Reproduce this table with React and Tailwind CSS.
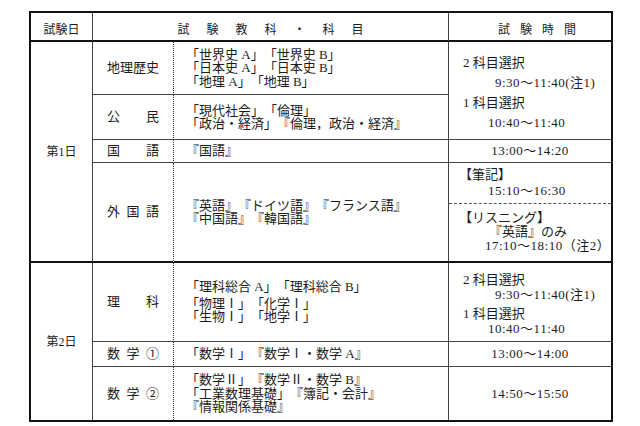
const dayCell =
  "flex items-center justify-center border-r border-b-2 border-r-[#444] border-b-[#111] text-[12px]";

function Name({ chars, last }) {
  return (
    <div
      className={`flex items-center justify-center border-r [border-right-style:dotted] border-r-[#333] ${
        last ? "border-b-2 border-b-[#111]" : last === false ? "" : "border-b border-b-[#444]"
      }`}
    >
      <span className="flex w-[52px] justify-between">
        {chars.map((c) => (
          <span key={c}>{c}</span>
        ))}
      </span>
    </div>
  );
}

function Subjects({ lines, last, gap }) {
  return (
    <div
      className={`flex flex-col justify-center border-r border-r-[#444] pl-[12px] leading-[13.5px] ${
        last ? "border-b-2 border-b-[#111]" : last === false ? "" : "border-b border-b-[#444]"
      }`}
    >
      {lines.map((l, i) => (
        <div key={i} className={gap && i === 0 ? "mb-[3px]" : ""}>
          {l}
        </div>
      ))}
    </div>
  );
}

export default function App() {
  return (
    <div className="h-[426px] w-[640px] bg-white pt-[11px] pl-[29px] text-[13px] text-[#1c1c1c] [font-family:'Liberation_Serif','Noto_Sans_CJK_JP',serif] [text-spacing-trim:space-all]">
      <div className="grid w-[584px] grid-cols-[62px_81px_275px_162px] grid-rows-[29px_53px_45px_23px_100px_79px_25px_53px] border-2 border-[#111]">
        {/* header */}
        <div className="flex items-center justify-center border-r border-b-2 border-r-[#444] border-b-[#111] pt-[6px] text-[12px]">
          試験日
        </div>
        <div className="col-span-2 flex items-center justify-center border-r border-b-2 border-r-[#444] border-b-[#111] pt-[6px] pl-[17px] text-[12px] tracking-[17px]">
          試験教科・科目
        </div>
        <div className="flex items-center justify-center border-b-2 border-b-[#111] pt-[6px] pl-[24px] text-[12px] tracking-[10px]">
          試験時間
        </div>

        {/* day 1 */}
        <div className={`row-span-4 ${dayCell}`}>第1日</div>
        <Name chars={["地", "理", "歴", "史"]} />
        <Subjects lines={["「世界史 A」「世界史 B」", "「日本史 A」「日本史 B」", "「地理 A」「地理 B」"]} />
        <div className="row-span-2 border-b border-b-[#444] pt-[11px] leading-[20px]">
          <div className="pl-[14px]">2 科目選択</div>
          <div className="pl-[46px] tracking-[0.5px]">9:30～11:40(注1)</div>
          <div className="pl-[14px]">1 科目選択</div>
          <div className="pl-[39px] tracking-[0.5px]">10:40～11:40</div>
        </div>

        <Name chars={["公", "民"]} />
        <Subjects lines={["「現代社会」「倫理」", "「政治・経済」『倫理，政治・経済』"]} />

        <Name chars={["国", "語"]} />
        <Subjects lines={["『国語』"]} />
        <div className="flex items-center justify-center border-b border-b-[#444] tracking-[0.5px]">
          13:00～14:20
        </div>

        <Name chars={["外", "国", "語"]} last />
        <Subjects lines={["『英語』『ドイツ語』『フランス語』", "『中国語』『韓国語』"]} last />
        <div className="flex flex-col border-b-2 border-b-[#111]">
          <div className="h-[41px] border-b border-dashed border-[#555] pt-[4px] leading-[16px]">
            <div className="pl-[10px]">【筆記】</div>
            <div className="pl-[39px] tracking-[0.5px]">15:10～16:30</div>
          </div>
          <div className="flex-1 pt-[7px] leading-[14px]">
            <div className="pl-[10px]">【リスニング】</div>
            <div className="pl-[40px]">『英語』のみ</div>
            <div className="pl-[36px] tracking-[0.5px]">17:10～18:10（注2）</div>
          </div>
        </div>

        {/* day 2 */}
        <div className="row-span-3 flex items-center justify-center border-r border-r-[#444] text-[12px]">
          第2日
        </div>
        <Name chars={["理", "科"]} />
        <Subjects
          gap
          lines={["「理科総合 A」「理科総合 B」", "「物理Ⅰ」「化学Ⅰ」", "「生物Ⅰ」「地学Ⅰ」"]}
        />
        <div className="border-b border-b-[#444] pt-[9px] leading-[15px]">
          <div className="pl-[14px]">2 科目選択</div>
          <div className="pl-[46px] tracking-[0.5px]">9:30～11:40(注1)</div>
          <div className="mt-[4px] pl-[14px]">1 科目選択</div>
          <div className="pl-[39px] tracking-[0.5px]">10:40～11:40</div>
        </div>

        <Name chars={["数", "学", "①"]} />
        <Subjects lines={["「数学Ⅰ」『数学Ⅰ・数学 A』"]} />
        <div className="flex items-center justify-center border-b border-b-[#444] tracking-[0.5px]">
          13:00～14:00
        </div>

        <Name chars={["数", "学", "②"]} last={false} />
        <Subjects
          last={false}
          lines={["「数学Ⅱ」『数学Ⅱ・数学 B』", "「工業数理基礎」『簿記・会計』", "『情報関係基礎』"]}
        />
        <div className="flex items-center justify-center tracking-[0.5px]">14:50～15:50</div>
      </div>
    </div>
  );
}
